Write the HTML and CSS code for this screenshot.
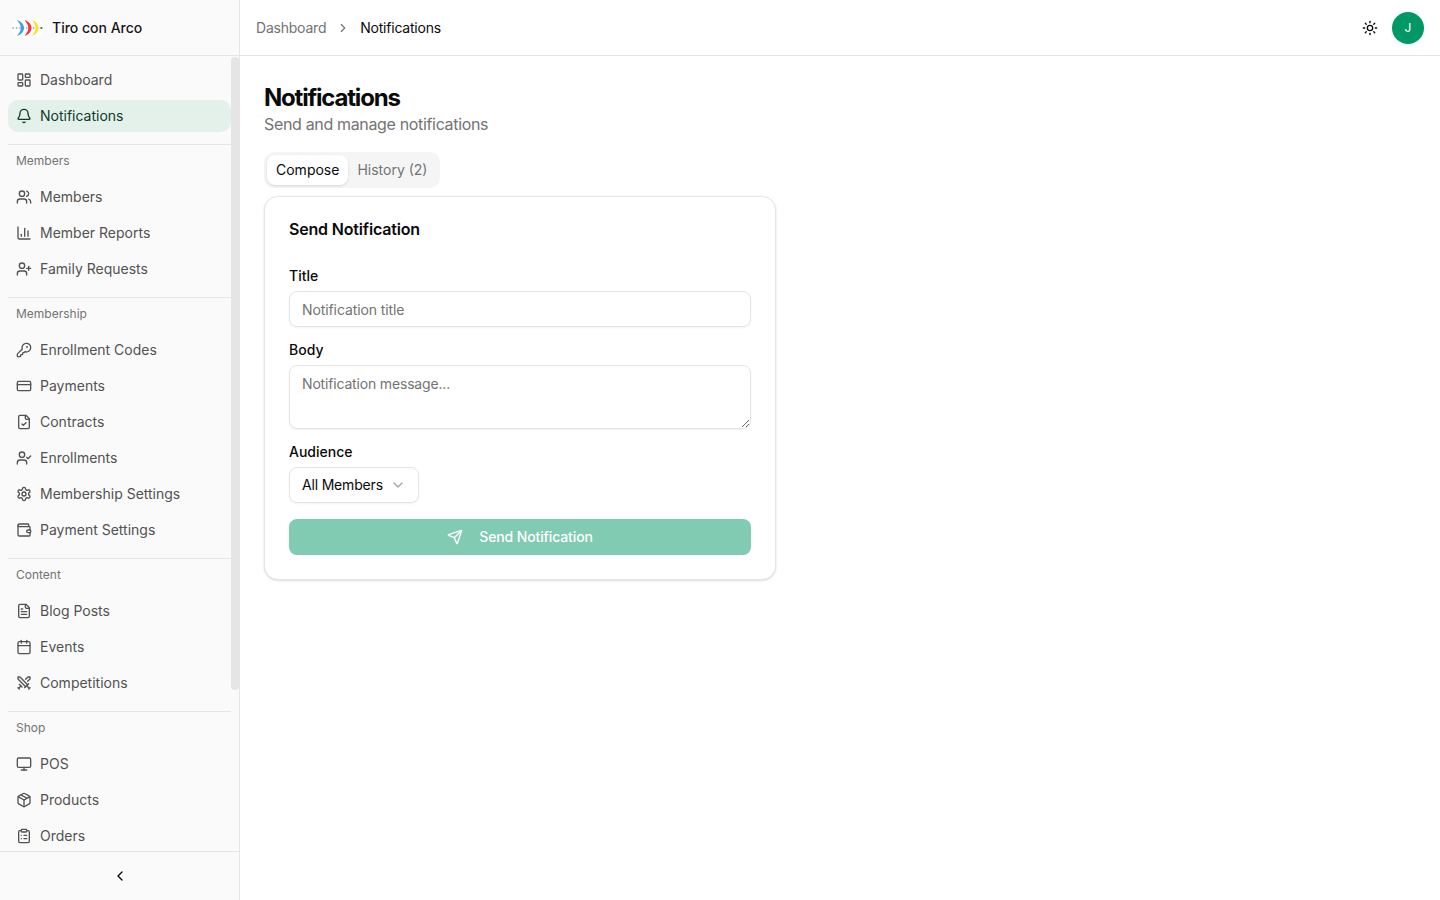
FILE: index.html
```html
<!DOCTYPE html>
<html lang="en">

<head>
  <meta charset="UTF-8">
  <meta name="viewport" content="width=device-width, initial-scale=1.0">
  <title>Notifications</title>
  <link rel="stylesheet" href="styles.css">
</head>

<body>
  <svg class="sprite" xmlns="http://www.w3.org/2000/svg">
    <symbol id="i-dashboard" viewBox="0 0 24 24"><rect width="7" height="9" x="3" y="3" rx="1"/><rect width="7" height="5" x="14" y="3" rx="1"/><rect width="7" height="9" x="14" y="12" rx="1"/><rect width="7" height="5" x="3" y="16" rx="1"/></symbol>
    <symbol id="i-bell" viewBox="0 0 24 24"><path d="M10.268 21a2 2 0 0 0 3.464 0"/><path d="M3.262 15.326A1 1 0 0 0 4 17h16a1 1 0 0 0 .74-1.673C19.41 13.956 18 12.499 18 8A6 6 0 0 0 6 8c0 4.499-1.411 5.956-2.738 7.326"/></symbol>
    <symbol id="i-users" viewBox="0 0 24 24"><path d="M16 21v-2a4 4 0 0 0-4-4H6a4 4 0 0 0-4 4v2"/><circle cx="9" cy="7" r="4"/><path d="M22 21v-2a4 4 0 0 0-3-3.87"/><path d="M16 3.13a4 4 0 0 1 0 7.75"/></symbol>
    <symbol id="i-chart" viewBox="0 0 24 24"><path d="M3 3v16a2 2 0 0 0 2 2h16"/><path d="M18 17V9"/><path d="M13 17V5"/><path d="M8 17v-3"/></symbol>
    <symbol id="i-user-plus" viewBox="0 0 24 24"><path d="M16 21v-2a4 4 0 0 0-4-4H6a4 4 0 0 0-4 4v2"/><circle cx="9" cy="7" r="4"/><path d="M19 8v6"/><path d="M22 11h-6"/></symbol>
    <symbol id="i-key" viewBox="0 0 24 24"><path d="M2.586 17.414A2 2 0 0 0 2 18.828V21a1 1 0 0 0 1 1h3a1 1 0 0 0 1-1v-1a1 1 0 0 1 1-1h1a1 1 0 0 0 1-1v-1a1 1 0 0 1 1-1h.172a2 2 0 0 0 1.414-.586l.814-.814a6.5 6.5 0 1 0-4-4z"/><circle cx="16.5" cy="7.5" r=".5"/></symbol>
    <symbol id="i-card" viewBox="0 0 24 24"><rect width="20" height="14" x="2" y="5" rx="2"/><path d="M2 10h20"/></symbol>
    <symbol id="i-file-check" viewBox="0 0 24 24"><path d="M15 2H6a2 2 0 0 0-2 2v16a2 2 0 0 0 2 2h12a2 2 0 0 0 2-2V7Z"/><path d="M14 2v4a2 2 0 0 0 2 2h4"/><path d="m9 15 2 2 4-4"/></symbol>
    <symbol id="i-user-check" viewBox="0 0 24 24"><path d="M16 21v-2a4 4 0 0 0-4-4H6a4 4 0 0 0-4 4v2"/><circle cx="9" cy="7" r="4"/><path d="m16 11 2 2 4-4"/></symbol>
    <symbol id="i-settings" viewBox="0 0 24 24"><path d="M12.22 2h-.44a2 2 0 0 0-2 2v.18a2 2 0 0 1-1 1.73l-.43.25a2 2 0 0 1-2 0l-.15-.08a2 2 0 0 0-2.73.73l-.22.38a2 2 0 0 0 .73 2.73l.15.1a2 2 0 0 1 1 1.72v.51a2 2 0 0 1-1 1.74l-.15.09a2 2 0 0 0-.73 2.73l.22.38a2 2 0 0 0 2.73.73l.15-.08a2 2 0 0 1 2 0l.43.25a2 2 0 0 1 1 1.73V20a2 2 0 0 0 2 2h.44a2 2 0 0 0 2-2v-.18a2 2 0 0 1 1-1.73l.43-.25a2 2 0 0 1 2 0l.15.08a2 2 0 0 0 2.73-.73l.22-.39a2 2 0 0 0-.73-2.73l-.15-.08a2 2 0 0 1-1-1.74v-.5a2 2 0 0 1 1-1.74l.15-.09a2 2 0 0 0 .73-2.73l-.22-.38a2 2 0 0 0-2.73-.73l-.15.08a2 2 0 0 1-2 0l-.43-.25a2 2 0 0 1-1-1.73V4a2 2 0 0 0-2-2z"/><circle cx="12" cy="12" r="3"/></symbol>
    <symbol id="i-wallet" viewBox="0 0 24 24"><path d="M19 7V4a1 1 0 0 0-1-1H5a2 2 0 0 0 0 4h15a1 1 0 0 1 1 1v4h-3a2 2 0 0 0 0 4h3a1 1 0 0 0 1-1v-2a1 1 0 0 0-1-1"/><path d="M3 5v14a2 2 0 0 0 2 2h15a1 1 0 0 0 1-1v-4"/></symbol>
    <symbol id="i-file-text" viewBox="0 0 24 24"><path d="M15 2H6a2 2 0 0 0-2 2v16a2 2 0 0 0 2 2h12a2 2 0 0 0 2-2V7Z"/><path d="M14 2v4a2 2 0 0 0 2 2h4"/><path d="M10 9H8"/><path d="M16 13H8"/><path d="M16 17H8"/></symbol>
    <symbol id="i-calendar" viewBox="0 0 24 24"><path d="M8 2v4"/><path d="M16 2v4"/><rect width="18" height="18" x="3" y="4" rx="2"/><path d="M3 10h18"/></symbol>
    <symbol id="i-swords" viewBox="0 0 24 24"><polyline points="14.5 17.5 3 6 3 3 6 3 17.5 14.5"/><path d="M13 19l6-6"/><path d="M16 16l4 4"/><path d="M19 21l2-2"/><polyline points="14.5 6.5 18 3 21 3 21 6 17.5 9.5"/><path d="M5 14l4 4"/><path d="M7 17l-3 3"/><path d="M3 19l2 2"/></symbol>
    <symbol id="i-monitor" viewBox="0 0 24 24"><rect width="20" height="14" x="2" y="3" rx="2"/><path d="M8 21h8"/><path d="M12 17v4"/></symbol>
    <symbol id="i-package" viewBox="0 0 24 24"><path d="M11 21.73a2 2 0 0 0 2 0l7-4A2 2 0 0 0 21 16V8a2 2 0 0 0-1-1.73l-7-4a2 2 0 0 0-2 0l-7 4A2 2 0 0 0 3 8v8a2 2 0 0 0 1 1.73z"/><path d="M12 22V12"/><polyline points="3.29 7 12 12 20.71 7"/><path d="m7.5 4.27 9 5.15"/></symbol>
    <symbol id="i-clipboard" viewBox="0 0 24 24"><rect width="8" height="4" x="8" y="2" rx="1"/><path d="M16 4h2a2 2 0 0 1 2 2v14a2 2 0 0 1-2 2H6a2 2 0 0 1-2-2V6a2 2 0 0 1 2-2h2"/><path d="M12 11h4"/><path d="M12 16h4"/><path d="M8 11h.01"/><path d="M8 16h.01"/></symbol>
    <symbol id="i-sun" viewBox="0 0 24 24"><circle cx="12" cy="12" r="4"/><path d="M12 2v2"/><path d="M12 20v2"/><path d="m4.93 4.93 1.41 1.41"/><path d="m17.66 17.66 1.41 1.41"/><path d="M2 12h2"/><path d="M20 12h2"/><path d="m6.34 17.66-1.41 1.41"/><path d="m19.07 4.93-1.41 1.41"/></symbol>
    <symbol id="i-send" viewBox="0 0 24 24"><path d="M14.536 21.686a.5.5 0 0 0 .937-.024l6.5-19a.496.496 0 0 0-.635-.635l-19 6.5a.5.5 0 0 0-.024.937l7.93 3.18a2 2 0 0 1 1.112 1.11z"/><path d="m21.854 2.147-10.94 10.939"/></symbol>
    <symbol id="i-left" viewBox="0 0 24 24"><path d="m15 18-6-6 6-6"/></symbol>
    <symbol id="i-right" viewBox="0 0 24 24"><path d="m9 18 6-6-6-6"/></symbol>
    <symbol id="i-down" viewBox="0 0 24 24"><path d="m6 9 6 6 6-6"/></symbol>
  </svg>

  <div class="app">
    <aside class="sidebar">
      <div class="brand">
        <svg class="brand-logo" viewBox="0 0 32 18" xmlns="http://www.w3.org/2000/svg">
          <rect width="32" height="18" rx="8" fill="#fff"/>
          <path d="M0.5 9h29" fill="none" stroke="#555" stroke-width="0.9" stroke-dasharray="1.4 2"/>
          <path d="M29 7.900 31 9l-2 1.100z" fill="#333"/>
          <path d="M5 1C10.500 3 12 6.500 12 9s-1.500 6-7 8C7.500 14 8.800 11.500 8.800 9S7.500 4 5 1z" fill="#3aa3e3"/>
          <path d="M12.500 1C18 3 19.500 6.500 19.500 9s-1.500 6-7 8C15 14 16.300 11.500 16.300 9S15 4 12.500 1z" fill="#ef3340"/>
          <path d="M20 1C25 3 26.500 6.500 26.500 9s-1.500 6-6.500 8C22.300 14 23.500 11.500 23.500 9S22.300 4 20 1z" fill="#fbe122"/>
        </svg>
        <span class="brand-name">Tiro con Arco</span>
      </div>

      <nav class="side-scroll">
        <div class="side-group">
          <a class="side-item"><svg class="icon"><use href="#i-dashboard"/></svg>Dashboard</a>
          <a class="side-item active"><svg class="icon"><use href="#i-bell"/></svg>Notifications</a>
        </div>
        <div class="side-group">
          <div class="side-label">Members</div>
          <a class="side-item"><svg class="icon"><use href="#i-users"/></svg>Members</a>
          <a class="side-item"><svg class="icon"><use href="#i-chart"/></svg>Member Reports</a>
          <a class="side-item"><svg class="icon"><use href="#i-user-plus"/></svg>Family Requests</a>
        </div>
        <div class="side-group">
          <div class="side-label">Membership</div>
          <a class="side-item"><svg class="icon"><use href="#i-key"/></svg>Enrollment Codes</a>
          <a class="side-item"><svg class="icon"><use href="#i-card"/></svg>Payments</a>
          <a class="side-item"><svg class="icon"><use href="#i-file-check"/></svg>Contracts</a>
          <a class="side-item"><svg class="icon"><use href="#i-user-check"/></svg>Enrollments</a>
          <a class="side-item"><svg class="icon"><use href="#i-settings"/></svg>Membership Settings</a>
          <a class="side-item"><svg class="icon"><use href="#i-wallet"/></svg>Payment Settings</a>
        </div>
        <div class="side-group">
          <div class="side-label">Content</div>
          <a class="side-item"><svg class="icon"><use href="#i-file-text"/></svg>Blog Posts</a>
          <a class="side-item"><svg class="icon"><use href="#i-calendar"/></svg>Events</a>
          <a class="side-item"><svg class="icon"><use href="#i-swords"/></svg>Competitions</a>
        </div>
        <div class="side-group">
          <div class="side-label">Shop</div>
          <a class="side-item"><svg class="icon"><use href="#i-monitor"/></svg>POS</a>
          <a class="side-item"><svg class="icon"><use href="#i-package"/></svg>Products</a>
          <a class="side-item"><svg class="icon"><use href="#i-clipboard"/></svg>Orders</a>
        </div>
        <div class="side-thumb"></div>
      </nav>

      <div class="side-foot"><svg class="icon dark"><use href="#i-left"/></svg></div>
    </aside>

    <div class="main">
      <header class="topbar">
        <div class="crumbs">
          <span class="crumb-muted">Dashboard</span>
          <svg class="icon crumb-sep"><use href="#i-right"/></svg>
          <span>Notifications</span>
        </div>
        <div class="top-actions">
          <svg class="icon dark"><use href="#i-sun"/></svg>
          <div class="avatar">J</div>
        </div>
      </header>

      <main class="content">
        <h1>Notifications</h1>
        <p class="subtitle">Send and manage notifications</p>

        <div class="tabs">
          <button class="tab active" type="button">Compose</button>
          <button class="tab" type="button">History (2)</button>
        </div>

        <section class="card">
          <h2>Send Notification</h2>
          <form class="form">
            <label class="field">
              <span>Title</span>
              <input type="text" placeholder="Notification title">
            </label>
            <label class="field">
              <span>Body</span>
              <textarea placeholder="Notification message..."></textarea>
            </label>
            <div class="field">
              <span>Audience</span>
              <button class="select" type="button">All Members<svg class="icon chev"><use href="#i-down"/></svg></button>
            </div>
            <button class="send" type="button"><svg class="icon"><use href="#i-send"/></svg>Send Notification</button>
          </form>
        </section>
      </main>
    </div>
  </div>
</body>

</html>
```

FILE: styles.css
```css
* {
  box-sizing: border-box;
}

body {
  margin: 0;
  background-color: #ffffff;
  color: #0a0a0a;
  font-family: Inter, "Noto Sans", sans-serif;
  font-size: 14px;
  line-height: 20px;
}

.sprite {
  display: none;
}

.icon {
  width: 16px;
  height: 16px;
  flex-shrink: 0;
  fill: none;
  stroke: currentColor;
  stroke-width: 2;
  stroke-linecap: round;
  stroke-linejoin: round;
}

.icon.dark {
  color: #0a0a0a;
}

.app {
  display: flex;
  height: 900px;
  overflow: hidden;
}

/* Sidebar */
.sidebar {
  display: flex;
  flex-direction: column;
  width: 240px;
  flex-shrink: 0;
  background-color: #fafafa;
  border-right: 1px solid #e5e5e5;
}

.brand {
  display: flex;
  align-items: center;
  gap: 8px;
  height: 56px;
  flex-shrink: 0;
  padding: 0 12px;
  border-bottom: 1px solid #e5e5e5;
}

.brand-logo {
  width: 32px;
  height: 18px;
}

.brand-name {
  font-weight: 500;
  color: #171717;
}

.side-scroll {
  position: relative;
  flex: 1;
  min-height: 0;
  overflow: hidden;
  padding-right: 8px;
}

.side-group {
  display: flex;
  flex-direction: column;
  gap: 4px;
  margin-left: 8px;
  padding: 8px 0 12px;
  border-bottom: 1px solid #e5e5e5;
}

.side-group:last-of-type {
  border-bottom: none;
}

.side-label {
  height: 16px;
  margin-bottom: 8px;
  padding-left: 8px;
  font-size: 12px;
  line-height: 16px;
  color: #737373;
}

.side-item {
  display: flex;
  align-items: center;
  gap: 8px;
  height: 32px;
  flex-shrink: 0;
  padding: 0 8px;
  border-radius: 10px;
  color: #525252;
}

.side-item.active {
  background-color: #e3f1ea;
  color: #0d3b2a;
}

.side-thumb {
  position: absolute;
  top: 1px;
  right: 0;
  width: 8px;
  height: 633px;
  border-radius: 4px;
  background-color: #e5e5e5;
}

.side-foot {
  display: flex;
  align-items: center;
  justify-content: center;
  height: 49px;
  flex-shrink: 0;
  border-top: 1px solid #e5e5e5;
}

/* Main */
.main {
  flex: 1;
  min-width: 0;
}

.topbar {
  display: flex;
  align-items: center;
  justify-content: space-between;
  height: 56px;
  padding: 0 16px;
  border-bottom: 1px solid #e5e5e5;
}

.crumbs {
  display: flex;
  align-items: center;
  gap: 10px;
  letter-spacing: -0.22px;
}

.crumb-muted {
  color: #737373;
}

.crumb-sep {
  width: 14px;
  height: 14px;
  color: #737373;
}

.top-actions {
  display: flex;
  align-items: center;
  gap: 14px;
}

.avatar {
  display: flex;
  align-items: center;
  justify-content: center;
  width: 32px;
  height: 32px;
  border-radius: 50%;
  background-color: #009966;
  color: #ffffff;
  font-size: 12px;
}

.content {
  padding: 24px;
}

h1 {
  margin: 4px 0 0;
  font-size: 24px;
  font-weight: 700;
  line-height: 28px;
  letter-spacing: -1.2px;
}

.subtitle {
  margin: 0 0 16px;
  font-size: 16px;
  line-height: 24px;
  letter-spacing: -0.34px;
  color: #737373;
}

.tabs {
  display: inline-flex;
  align-items: center;
  height: 36px;
  padding: 3px;
  border-radius: 10px;
  background-color: #f5f5f5;
  vertical-align: top;
}

.tab {
  height: 30px;
  padding: 0 9px;
  border: 0;
  border-radius: 8px;
  background: none;
  color: #737373;
  font: inherit;
  font-weight: 400;
}

.tab + .tab {
  padding: 0 10px 0 9px;
}

.tab.active {
  background-color: #ffffff;
  color: #0a0a0a;
  box-shadow: 0 1px 3px rgba(0, 0, 0, 0.1), 0 1px 2px -1px rgba(0, 0, 0, 0.1);
}

.card {
  width: 512px;
  height: 384px;
  margin-top: 8px;
  padding: 24px;
  border: 1px solid #e5e5e5;
  border-radius: 14px;
  background-color: #ffffff;
  box-shadow: 0 1px 3px rgba(0, 0, 0, 0.1), 0 1px 2px -1px rgba(0, 0, 0, 0.1);
}

h2 {
  margin: 0 0 32px;
  font-size: 16px;
  font-weight: 600;
  line-height: 16px;
  letter-spacing: -0.18px;
}

.form {
  display: flex;
  flex-direction: column;
  gap: 16px;
}

.field {
  display: flex;
  flex-direction: column;
  align-items: flex-start;
  gap: 8px;
}

.field > span {
  font-weight: 500;
  line-height: 14px;
}

input,
textarea {
  display: block;
  width: 100%;
  padding: 8px 12px;
  border: 1px solid #e5e5e5;
  border-radius: 8px;
  background-color: #ffffff;
  color: #0a0a0a;
  font: inherit;
  letter-spacing: -0.1px;
  outline: none;
  box-shadow: 0 1px 2px rgba(0, 0, 0, 0.05);
}

input {
  height: 36px;
}

textarea {
  height: 64px;
  letter-spacing: -0.17px;
  resize: vertical;
}

input::placeholder,
textarea::placeholder {
  color: #737373;
  opacity: 1;
}

.select {
  display: inline-flex;
  align-items: center;
  gap: 7px;
  height: 36px;
  padding: 0 12px;
  border: 1px solid #e5e5e5;
  border-radius: 8px;
  background-color: #ffffff;
  color: #0a0a0a;
  font: inherit;
  letter-spacing: -0.18px;
  box-shadow: 0 1px 2px rgba(0, 0, 0, 0.05);
}

.chev {
  color: #a3a3a3;
}

.send {
  display: flex;
  align-items: center;
  justify-content: center;
  gap: 16px;
  height: 36px;
  border: 0;
  border-radius: 8px;
  background-color: #80cbb2;
  color: #ffffff;
  font: inherit;
  font-weight: 500;
  letter-spacing: -0.12px;
}
```
